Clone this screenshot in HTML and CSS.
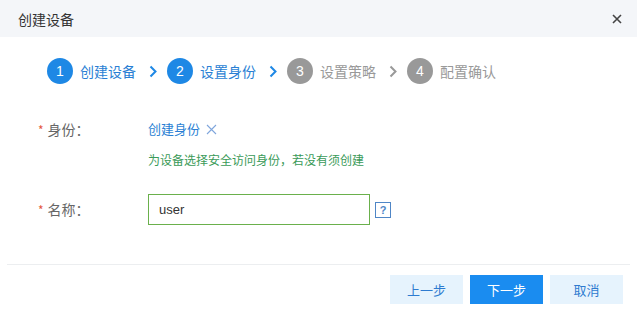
FILE: index.html
```html
<!DOCTYPE html>
<html lang="zh-CN">

<head>
  <meta charset="UTF-8">
  <title>创建设备</title>
  <link rel="stylesheet" href="styles.css">
</head>

<body>
  <div class="dialog">
    <div class="dialog-header">
      <span class="dialog-title">创建设备</span>
      <svg class="close" width="10" height="10" viewBox="0 0 10 10"><path d="M1 1L9 9M9 1L1 9" stroke="#444" stroke-width="1.6"/></svg>
    </div>

    <!-- 步骤条 -->
    <div class="steps">
      <div class="step active"><span class="num">1</span><span class="name">创建设备</span></div>
      <svg class="arrow active" width="8" height="13" viewBox="0 0 8 13"><path d="M1.5 1.5L6.5 6.5L1.5 11.5" fill="none" stroke-width="2"/></svg>
      <div class="step active"><span class="num">2</span><span class="name">设置身份</span></div>
      <svg class="arrow active" width="8" height="13" viewBox="0 0 8 13"><path d="M1.5 1.5L6.5 6.5L1.5 11.5" fill="none" stroke-width="2"/></svg>
      <div class="step"><span class="num">3</span><span class="name">设置策略</span></div>
      <svg class="arrow" width="8" height="13" viewBox="0 0 8 13"><path d="M1.5 1.5L6.5 6.5L1.5 11.5" fill="none" stroke-width="2"/></svg>
      <div class="step"><span class="num">4</span><span class="name">配置确认</span></div>
    </div>

    <div class="form">
      <div class="row">
        <label class="label"><span class="required">*</span>身份：</label>
        <div class="field">
          <div class="identity"><a class="link">创建身份</a><svg class="remove" width="11" height="11" viewBox="0 0 11 11"><path d="M1 1L10 10M10 1L1 10" stroke="#7fa6dc" stroke-width="1.1"/></svg></div>
          <div class="hint">为设备选择安全访问身份，若没有须创建</div>
        </div>
      </div>
      <div class="row name-row">
        <label class="label"><span class="required">*</span>名称：</label>
        <div class="field inline">
          <input type="text" class="input" value="user">
          <span class="help">?</span>
        </div>
      </div>
    </div>

    <div class="footer">
      <button type="button" class="btn">上一步</button>
      <button type="button" class="btn primary">下一步</button>
      <button type="button" class="btn">取消</button>
    </div>
  </div>
</body>

</html>
```

FILE: styles.css
```css
* {
  margin: 0;
  padding: 0;
  box-sizing: border-box;
}

body {
  font-family: "Noto Sans CJK SC", "Liberation Sans", sans-serif;
  background-color: #fff;
  color: #333;
  font-size: 13px;
}

.dialog {
  width: 637px;
  height: 318px;
  background-color: white;
}

.dialog-header {
  height: 37px;
  background-color: #f4f6f9;
  display: flex;
  align-items: center;
  justify-content: space-between;
  padding: 0 15px 0 18px;
}

.dialog-title {
  font-size: 14px;
  color: #333;
}

.steps {
  display: flex;
  align-items: center;
  padding: 21px 0 0 47px;
}

.step {
  display: flex;
  align-items: center;
  color: #999;
}

.step .num {
  width: 26px;
  height: 26px;
  border-radius: 50%;
  background-color: #999;
  color: white;
  font-size: 14px;
  display: flex;
  align-items: center;
  justify-content: center;
  font-family: "Liberation Sans", sans-serif;
}

.step .name {
  margin-left: 7px;
  font-size: 14px;
}

.step.active {
  color: #2a7fd4;
}

.step.active .num {
  background-color: #1e88e5;
}

.arrow {
  stroke: #999;
  margin: 0 10px 0 13px;
}

.arrow.active {
  stroke: #1e88e5;
}

.form {
  padding: 36px 0 0 38px;
}

.row {
  display: flex;
}

.label {
  width: 110px;
  color: #666;
  font-size: 14px;
  line-height: 18px;
}

.required {
  color: #e4573d;
  font-size: 12px;
  margin-right: 4px;
}

.identity {
  display: flex;
  align-items: center;
  line-height: 18px;
}

.link {
  color: #2a7fd4;
}

.remove {
  margin-left: 6px;
}

.hint {
  color: #3a9a58;
  font-size: 12px;
  margin-top: 13px;
  line-height: 18px;
}

.name-row {
  margin-top: 25px;
  align-items: center;
}

.field.inline {
  display: flex;
  align-items: center;
}

.input {
  width: 222px;
  height: 31px;
  border: 1px solid #6ab04c;
  padding: 0 10px;
  font-size: 13px;
  font-family: "Liberation Sans", sans-serif;
  color: #333;
  outline: none;
}

.help {
  width: 16px;
  height: 16px;
  border: 1px solid #4f86c6;
  color: #4f86c6;
  font-size: 11px;
  font-weight: bold;
  display: flex;
  align-items: center;
  justify-content: center;
  margin-left: 5px;
  font-family: "Liberation Sans", sans-serif;
}

.footer {
  margin: 39px 7px 0 7px;
  border-top: 1px solid #eceef0;
  display: flex;
  justify-content: flex-end;
  gap: 7px;
  padding: 10px 7px 0 0;
}

.btn {
  width: 73px;
  height: 29px;
  border: none;
  background-color: #e6f3fd;
  color: #2e7bd0;
  font-size: 13px;
  font-family: "Noto Sans CJK SC", sans-serif;
  cursor: pointer;
}

.btn.primary {
  background-color: #1a8cf0;
  color: white;
}
```
